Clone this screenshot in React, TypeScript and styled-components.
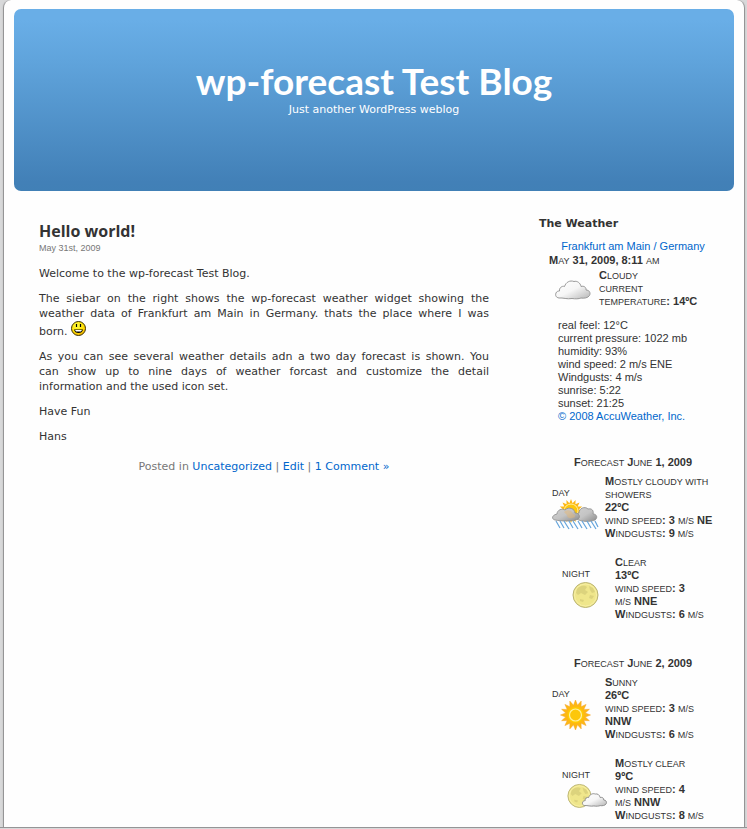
import React from "react";
import styled, { createGlobalStyle } from "styled-components";

const Global = createGlobalStyle`
  * { box-sizing: border-box; }
  body {
    margin: 0;
    padding: 0 2px 0 3px;
    border-bottom: 1px solid #959596;
    background: #d8d9da;
    color: #333;
    font-family: "DejaVu Sans", sans-serif;
    font-size: 11px;
    line-height: 15px;
  }
  h1, h2, h3, p, ul { margin: 0; padding: 0; }
`;

const Page = styled.div`
  background: #fefefe;
  border: solid #959596;
  border-width: 0 1px;
  border-radius: 8px 8px 0 0;
  box-shadow: 0 0 2px #bbb;
  padding: 9px 10px 5px;
`;

const Header = styled.header`
  height: 182px;
  border-radius: 7px;
  background: linear-gradient(#69aee7 0%, #69aee7 6%, #5fa3db 30%, #4280b7 95%, #4180b6 100%);
  color: #fff;
  text-align: center;
  padding-top: 51px;
`;

const BlogTitle = styled.h1`
  font-family: "Lato", sans-serif;
  font-size: 37px;
  line-height: 42px;
  font-weight: 700;
`;

const Tagline = styled.p`
  line-height: 15px;
`;

const Columns = styled.div`
  display: grid;
  grid-template-columns: minmax(0, 1fr) 178px;
  column-gap: 50px;
  padding: 25px 17px 0 25px;
`;

const Post = styled.article`
  padding-top: 4px;
`;

const PostTitle = styled.h2`
  font-family: "Open Sans", sans-serif;
  font-size: 16px;
  line-height: 22px;
  font-weight: 700;
`;

const PostDate = styled.small`
  display: block;
  font-family: "Liberation Sans", sans-serif;
  font-size: 9px;
  line-height: 13px;
  color: #777;
`;

const Entry = styled.div`
  display: grid;
  gap: 10px;
  padding-top: 11px;
  text-align: justify;
`;

const Together = styled.span`
  white-space: nowrap;
`;

const Link = styled.a`
  color: #06c;
  text-decoration: none;
`;

const Meta = styled.p`
  padding-top: 15px;
  color: #777;
  text-align: center;
`;

const Sidebar = styled.aside`
  font-family: "Liberation Sans", sans-serif;
  line-height: 13px;
`;

const SidebarTitle = styled.h2`
  font-family: "DejaVu Sans", sans-serif;
  font-size: 11px;
  line-height: 15px;
  font-weight: 700;
`;

const Widget = styled.div`
  padding: 9px 0 0 10px;
`;

const Place = styled.div`
  text-align: center;
`;

const DateLine = styled.div`
  padding-top: 1px;
  font-weight: 700;
`;

const Small = styled.span`
  font-size: 9px;
  line-height: 9px;
  font-weight: 400;
  text-transform: uppercase;
`;

const Current = styled.div`
  display: grid;
  grid-template-columns: 50px 1fr;
  padding-top: 2px;
  font-weight: 700;
`;

const CurrentIcon = styled.div`
  padding: 11px 0 0 6px;
  line-height: 0;
`;

const Details = styled.ul`
  list-style: none;
  padding: 11px 0 0 9px;
`;

const Forecast = styled.section`
  padding-bottom: 36px;
  &:first-of-type { padding-top: 33px; }
  &:last-of-type { padding-bottom: 0; }
`;

const ForecastTitle = styled.h3`
  font-size: 11px;
  line-height: 13px;
  text-align: center;
`;

const Period = styled.div<{ $night?: boolean }>`
  display: grid;
  grid-template-columns: 53px 1fr;
  padding-top: ${(p) => (p.$night ? 16 : 6)}px;
  padding-left: ${(p) => (p.$night ? 13 : 3)}px;
  white-space: nowrap;
  font-weight: 700;
`;

const PeriodLabel = styled.div`
  padding-top: 11px;
`;

const IconSlot = styled.div<{ $indent: number }>`
  height: 32px;
  padding-left: ${(p) => p.$indent}px;
  line-height: 0;
`;

const CLOUD =
  "M4 18C1 17.500 0 15.500 1 13C1.500 11.500 3 11 4.500 11C4 8 7 5.500 9.500 6.500C11 2 15 0 19 1.500C22 0.500 25.500 3 26 6.500C29 5.500 31.500 7.500 31 10C34 10 36 12.500 34.500 15.500C33 18 29 18.500 26 18C24 19 20 19 17 18.500C12 19.500 8 17.500 4 18Z";

const CloudGradient = ({ id, dark }: { id: string; dark?: boolean }) => (
  <linearGradient id={id} x1="0" y1="0" x2="1" y2="1">
    <stop offset="0" stopColor={dark ? "#d0d0d0" : "#fff"} />
    <stop offset="0.5" stopColor={dark ? "#c4c4c4" : "#f6f6f6"} />
    <stop offset="1" stopColor={dark ? "#8c8c8c" : "#b5b5b5"} />
  </linearGradient>
);

const CloudIcon = () => (
  <svg width="37" height="20" viewBox="0 0 37 20" aria-label="Cloudy">
    <defs><CloudGradient id="cloud" /></defs>
    <path d={CLOUD} fill="url(#cloud)" stroke="#999" />
  </svg>
);

const rays = (cx: number, cy: number, inner: number, outer: number, count: number) =>
  Array.from({ length: count * 2 }, (_, i) => {
    const r = i % 2 ? inner : outer;
    const a = (Math.PI * i) / count - Math.PI / 2;
    return `${(cx + r * Math.cos(a)).toFixed(1)},${(cy + r * Math.sin(a)).toFixed(1)}`;
  }).join(" ");

const SunIcon = () => (
  <svg width="32" height="30" viewBox="0 0 32 30" aria-label="Sunny">
    <polygon points={rays(15.5, 15, 10, 15, 16)} fill="#fdb813" stroke="#f3a128" strokeWidth="0.500" />
    <circle cx="15.500" cy="15" r="8" fill="#fc0" />
    <circle cx="15.500" cy="15" r="6" fill="#fdc70b" stroke="#fff0a0" strokeWidth="1.200" />
  </svg>
);

const ShowersIcon = () => (
  <svg width="48" height="32" viewBox="0 0 48 32" aria-label="Mostly cloudy with showers">
    <defs><CloudGradient id="rain" dark /></defs>
    <polygon points={rays(19, 12, 8, 12, 16)} fill="#fdb813" />
    <circle cx="19" cy="12" r="7" fill="#fdc70b" stroke="#fff0a0" />
    <path d="M25 20C22 18 23 15 27 14C27 9 33 7 36 10C40 9 42 12 41 15C45 15 46 19 43 21C39 23 29 23 25 20Z" fill="url(#rain)" stroke="#8b8b8b" strokeWidth="0.800" />
    <path d="M3 21C-1 20 0 16 5 15C5 11 10 9 13 11C17 7 23 10 23 14C27 14 29 18 26 20C21 23 8 22 3 21Z" fill="url(#rain)" stroke="#8b8b8b" strokeWidth="0.800" />
    <path d="M12 13C15 10 20 11 21 15C24 15 24 19 20 19C17 20 15 18 15 16Z" fill="#e3b878" opacity="0.500" />
    <path d="M4 22l4 7M8 22l4 7M12 22l5 8M17 22l4 7M21 22l5 8M26 22l4 7M30 22l5 8M35 22l4 7M39 22l5 8M43 22l3 6" stroke="#65a5dc" strokeWidth="1.200" fill="none" />
  </svg>
);

const Moon = () => (
  <g>
    <circle cx="13.500" cy="13" r="12.500" fill="#efe68b" stroke="#b9b374" />
    <circle cx="13.500" cy="13" r="11" fill="none" stroke="#f7efa5" strokeWidth="1" />
    <path d="M5 7C8 3 13 3 15 5L13 8L16 10L13 13L9 11L6 13L4 11ZM17 4L21 6L23 10L20 11L18 8ZM18 13L22 14L20 17L17 16ZM8 17L12 18L11 20L8 19Z" fill="#d4ca78" opacity="0.700" />
  </g>
);

const MoonIcon = () => (
  <svg width="28" height="29" viewBox="0 -2 28 29" aria-label="Clear"><Moon /></svg>
);

const MoonCloudIcon = () => (
  <svg width="42" height="29" viewBox="0 -2 42 29" aria-label="Mostly clear">
    <defs><CloudGradient id="wisp" /></defs>
    <g transform="translate(0 1) scale(0.920)"><Moon /></g>
    <path d={CLOUD} transform="translate(15 10) scale(0.700)" fill="url(#wisp)" stroke="#888" strokeWidth="1.300" />
  </svg>
);

const SmileyFace = styled.svg`
  vertical-align: -1px;
`;

const Smiley = () => (
  <SmileyFace width="15" height="15" viewBox="0 0 15 15" aria-label="smile">
    <defs>
      <radialGradient id="face" cx="0.400" cy="0.300" r="0.800">
        <stop offset="0" stopColor="#ffff40" />
        <stop offset="0.600" stopColor="#fd0" />
        <stop offset="1" stopColor="#f0a000" />
      </radialGradient>
    </defs>
    <circle cx="7.500" cy="7.500" r="7" fill="url(#face)" stroke="#3a3000" />
    <path d="M5.500 3v3M9.500 3v3" stroke="#000" strokeWidth="1.200" />
    <path d="M3 8.500H12C11.500 11 10 12 7.500 12S3.500 11 3 8.500Z" fill="#000" />
    <path d="M4 9H11L10 10.500H5Z" fill="#fff" />
  </SmileyFace>
);

type PeriodData = {
  night?: boolean;
  sky: string;
  temp: string;
  wind: string;
  dir: string;
  breakBefore: "unit" | "dir" | "none";
  gusts: string;
  indent: number;
  icon: React.ReactNode;
};

const days: { date: string; periods: PeriodData[] }[] = [
  {
    date: "1, 2009",
    periods: [
      { sky: "Mostly cloudy with showers", temp: "22", wind: "3", dir: "NE", breakBefore: "none", gusts: "9", indent: 0, icon: <ShowersIcon /> },
      { night: true, sky: "Clear", temp: "13", wind: "3", dir: "NNE", breakBefore: "unit", gusts: "6", indent: 10, icon: <MoonIcon /> },
    ],
  },
  {
    date: "2, 2009",
    periods: [
      { sky: "Sunny", temp: "26", wind: "3", dir: "NNW", breakBefore: "dir", gusts: "6", indent: 8, icon: <SunIcon /> },
      { night: true, sky: "Mostly clear", temp: "9", wind: "4", dir: "NNW", breakBefore: "unit", gusts: "8", indent: 5, icon: <MoonCloudIcon /> },
    ],
  },
];

const Sky = styled.div`
  white-space: normal;
`;

const Caps = ({ children }: { children: string }) => (
  <>{children[0]}<Small>{children.slice(1)}</Small></>
);

const PeriodRow = ({ data }: { data: PeriodData }) => (
  <Period $night={data.night}>
    <div>
      <PeriodLabel><Small>{data.night ? "night" : "day"}</Small></PeriodLabel>
      <IconSlot $indent={data.indent}>{data.icon}</IconSlot>
    </div>
    <div>
      <Sky><Caps>{data.sky}</Caps></Sky>
      <div>{data.temp}ºC</div>
      <div>
        <Small>wind speed</Small>: {data.wind}
        {data.breakBefore === "unit" ? <br /> : " "}
        <Small>m/s</Small>
        {data.breakBefore === "dir" ? <br /> : " "}
        {data.dir}
      </div>
      <div><Caps>Windgusts</Caps>: {data.gusts} <Small>m/s</Small></div>
    </div>
  </Period>
);

export default function App() {
  return (
    <>
      <Global />
      <Page>
        <Header>
          <BlogTitle>wp-forecast Test Blog</BlogTitle>
          <Tagline>Just another WordPress weblog</Tagline>
        </Header>
        <Columns>
          <Post>
            <PostTitle>Hello world!</PostTitle>
            <PostDate>May 31st, 2009</PostDate>
            <Entry>
              <p>Welcome to the wp-forecast Test Blog.</p>
              <p>
                The siebar on the right shows the wp-forecast weather widget showing the weather data of
                Frankfurt am Main in Germany. thats the place where I was{" "}
                <Together>born. <Smiley /></Together>
              </p>
              <p>
                As you can see several weather details adn a two day forecast is shown. You{" "}
                <Together>can show</Together> up to nine days of weather forcast and customize the detail{" "}
                <Together>information and</Together> the used icon set.
              </p>
              <p>Have Fun</p>
              <p>Hans</p>
            </Entry>
            <Meta>
              Posted in <Link href="#category">Uncategorized</Link> | <Link href="#edit">Edit</Link> |{" "}
              <Link href="#comments">1 Comment »</Link>
            </Meta>
          </Post>
          <Sidebar>
            <SidebarTitle>The Weather</SidebarTitle>
            <Widget>
              <Place><Link href="#location">Frankfurt am Main / Germany</Link></Place>
              <DateLine><Caps>May</Caps> 31, 2009, 8:11 <Small>am</Small></DateLine>
              <Current>
                <CurrentIcon><CloudIcon /></CurrentIcon>
                <div>
                  <Caps>Cloudy</Caps><br />
                  <Small>current</Small><br />
                  <Small>temperature</Small>: 14ºC
                </div>
              </Current>
              <Details>
                <li>real feel: 12°C</li>
                <li>current pressure: 1022 mb</li>
                <li>humidity: 93%</li>
                <li>wind speed: 2 m/s ENE</li>
                <li>Windgusts: 4 m/s</li>
                <li>sunrise: 5:22</li>
                <li>sunset: 21:25</li>
                <li><Link href="#accuweather">© 2008 AccuWeather, Inc.</Link></li>
              </Details>
              {days.map((day) => (
                <Forecast key={day.date}>
                  <ForecastTitle><Caps>Forecast</Caps> <Caps>June</Caps> {day.date}</ForecastTitle>
                  {day.periods.map((p) => <PeriodRow key={p.sky} data={p} />)}
                </Forecast>
              ))}
            </Widget>
          </Sidebar>
        </Columns>
      </Page>
    </>
  );
}
